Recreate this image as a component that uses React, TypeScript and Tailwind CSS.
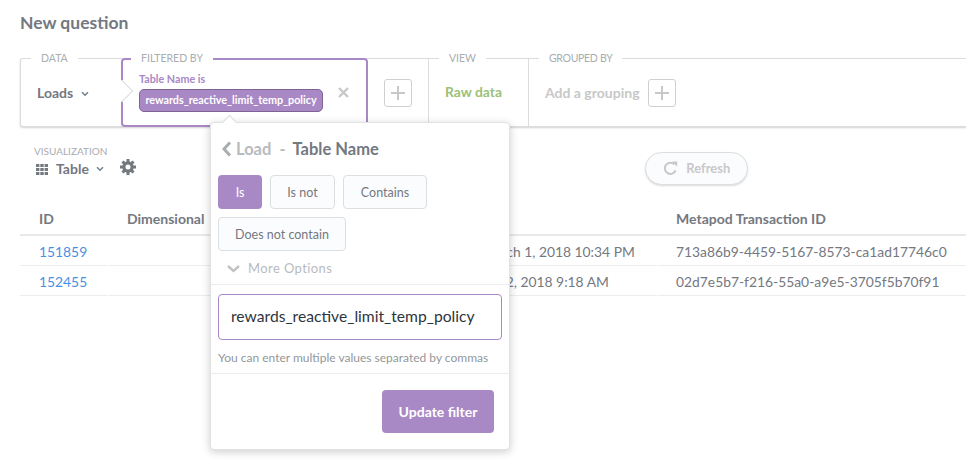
import * as React from 'react';

const Plus = () => (
  <div className="flex h-[28px] w-[28px] items-center justify-center rounded-[3px] border border-[#d0d0d0] bg-white">
    <svg width="14" height="14" viewBox="0 0 14 14">
      <path d="M7 0v14M0 7h14" stroke="#c8c8c8" strokeWidth="2" fill="none" />
    </svg>
  </div>
);

const Caret = ({ className }: { className?: string }) => (
  <svg className={className} width="8" height="6" viewBox="0 0 8 6">
    <path d="M1 1.2 4 4.2 7 1.2" stroke="#74838f" strokeWidth="1.6" fill="none" />
  </svg>
);

const Gear = () => (
  <svg width="16" height="16" viewBox="0 0 16 16">
    <g fill="#74787f">
      <path fillRule="evenodd" d="M8 2.2a5.8 5.8 0 1 0 0 11.6A5.8 5.8 0 0 0 8 2.2Zm0 3.3a2.5 2.5 0 1 1 0 5 2.5 2.5 0 0 1 0-5Z" />
      <rect x="6.5" y="0" width="3" height="3.4" />
      <rect x="6.5" y="12.6" width="3" height="3.4" />
      <rect x="0" y="6.5" width="3.4" height="3" />
      <rect x="12.6" y="6.5" width="3.4" height="3" />
      <rect x="6.5" y="0.2" width="3" height="3.4" transform="rotate(45 8 8)" />
      <rect x="6.5" y="12.4" width="3" height="3.4" transform="rotate(45 8 8)" />
      <rect x="0.2" y="6.5" width="3.4" height="3" transform="rotate(45 8 8)" />
      <rect x="12.4" y="6.5" width="3.4" height="3" transform="rotate(45 8 8)" />
    </g>
  </svg>
);

const Grid = () => (
  <svg width="12" height="11" viewBox="0 0 12 11" fill="#74787f">
    <rect x="0" y="0" width="3.4" height="3" />
    <rect x="4.3" y="0" width="3.4" height="3" />
    <rect x="8.6" y="0" width="3.4" height="3" />
    <rect x="0" y="4" width="3.4" height="3" />
    <rect x="4.3" y="4" width="3.4" height="3" />
    <rect x="8.6" y="4" width="3.4" height="3" />
    <rect x="0" y="8" width="3.4" height="3" />
    <rect x="4.3" y="8" width="3.4" height="3" />
    <rect x="8.6" y="8" width="3.4" height="3" />
  </svg>
);

const Label = ({ children, className }: { children: React.ReactNode; className: string }) => (
  <span className={`absolute top-[-7px] bg-white px-[10px] text-[10.5px] leading-[13px] text-[#a9adb0] uppercase ${className}`}>
    {children}
  </span>
);

const Option = ({ children, active, className }: { children: React.ReactNode; active?: boolean; className: string }) => (
  <div
    className={
      active
        ? `flex h-[34px] items-center justify-center rounded-[4px] bg-[#a989c5] pt-[2px] text-[12.5px] text-white ${className}`
        : `flex h-[34px] items-center justify-center rounded-[4px] border border-[#dcdfe2] bg-[#fbfcfe] pt-[2px] text-[12.5px] text-[#74787f] ${className}`
    }
  >
    {children}
  </div>
);

const rows = [
  ['151859', 'March 1, 2018 10:34 PM', '713a86b9-4459-5167-8573-ca1ad17746c0'],
  ['152455', 'Jan 2, 2018 9:18 AM', '02d7e5b7-f216-55a0-a9e5-3705f5b70f91'],
];

const App: React.FC = () => {
  return (
    <div className="relative h-[464px] w-[966px] overflow-hidden bg-white font-['Lato',sans-serif]">
      <h1 className="pt-[12px] pl-[20px] text-[17.5px] leading-[22px] font-bold text-[#74787f]">New question</h1>

      <div className="mt-[24px] ml-[20px] flex h-[69px] rounded-l-[3px] border-t border-b border-l border-[#dcdcdc] bg-white shadow-[0_1px_2px_rgba(0,0,0,0.18)]">
        <div className="relative flex w-[100px] items-center pl-[16px]">
          <Label className="left-[10px]">Data</Label>
          <span className="text-[14px] font-bold text-[#74787f]">Loads</span>
          <Caret className="mt-[2px] ml-[8px]" />
        </div>

        <div className="relative mt-[-1px] mb-[-1px] h-[69px] w-[247px] rounded-[4px] border-2 border-[#a989c5] pt-[12px] pl-[16px]">
          <Label className="!top-[-8px] left-[8px]">Filtered by</Label>
          <div className="absolute top-[23px] left-[-9px] h-[16px] w-[16px] rotate-45 border-t border-r border-[#dcdcdc] bg-white" />
          <div className="text-[10.75px] leading-[14px] font-bold text-[#a989c5]">Table Name is</div>
          <div className="mt-[3px] flex items-start">
            <div className="flex h-[23px] w-[184px] items-center justify-center rounded-[5px] border border-[#7f6394] bg-[#a989c5] text-[10.75px] font-bold text-white">
              rewards_reactive_limit_temp_policy
            </div>
            <svg className="mt-[-2px] ml-[15px]" width="11" height="11" viewBox="0 0 11 11">
              <path d="M1 1l9 9M10 1l-9 9" stroke="#c8c8c8" strokeWidth="2.4" fill="none" />
            </svg>
          </div>
        </div>

        <div className="flex w-[60px] items-center justify-center">
          <Plus />
        </div>

        <div className="relative flex w-[100px] items-center border-l border-[#dcdcdc] pl-[16px]">
          <Label className="left-[10px]">View</Label>
          <span className="text-[13.85px] font-bold text-[#9cc177]">Raw data</span>
        </div>

        <div className="relative flex flex-1 items-center border-l border-[#dcdcdc] pl-[16px]">
          <Label className="left-[10px] tracking-[-0.3px]">Grouped by</Label>
          <span className="text-[14px] font-bold text-[#c8c8c8]">Add a grouping</span>
          <div className="ml-[8px]">
            <Plus />
          </div>
        </div>
      </div>

      <div className="mt-[18px] flex h-[43px] items-start pl-[34px]">
        <div>
          <div className="text-[10px] leading-[13px] text-[#a9adb0] uppercase">Visualization</div>
          <div className="mt-[2px] ml-[2px] flex items-center">
            <Grid />
            <span className="ml-[8px] text-[14px] leading-[18px] font-bold text-[#74787f]">Table</span>
            <Caret className="ml-[7px]" />
          </div>
        </div>
        <div className="mt-[14px] ml-[13px]">
          <Gear />
        </div>
        <div className="mt-[7px] ml-[509px] flex h-[33px] w-[103px] items-center justify-center rounded-full border border-[#dcdfe2] bg-[#fbfcfe] text-[13px] font-bold text-[#c8c8c8] shadow-[0_1px_2px_rgba(0,0,0,0.15)]">
          <svg className="mr-[8px]" width="15" height="15" viewBox="0 0 15 15">
            <path d="M12.6 9.5A5.6 5.6 0 1 1 11.4 3.4" stroke="#c8c8c8" strokeWidth="2" fill="none" />
            <path d="M9 0.5h5.2v5.2z" fill="#c8c8c8" />
          </svg>
          Refresh
        </div>
      </div>

      <div className="mt-[15px] ml-[20px] text-[13.85px] text-[#74787f]">
        <div className="flex h-[33px] items-center border-b-2 border-[#e8e8e8] text-[14px] font-bold">
          <div className="w-[107px] pl-[19px]">ID</div>
          <div className="w-[549px]">Dimensional</div>
          <div>Metapod Transaction ID</div>
        </div>
        {rows.map(([id, date, txn]) => (
          <div key={id} className="flex h-[30px]">
            <div className="mr-px flex w-[87px] items-center border-b border-[#ececec] pt-[3px] pl-[19px] text-[#4a90e2]">{id}</div>
            <div className="w-[373px] border-b border-[#ececec]" />
            <div className="mr-px flex w-[176px] items-center border-b border-[#ececec] pt-[3px] pl-px">{date}</div>
            <div className="flex flex-1 items-center border-b border-[#ececec] pt-[3px] pl-[18px]">{txn}</div>
          </div>
        ))}
      </div>

      <div className="absolute top-[122px] left-[210px] h-[328px] w-[300px] rounded-[4px] border border-[#e2e2e2] bg-white shadow-[0_2px_8px_rgba(0,0,0,0.2)]">
        <div className="absolute top-[-6px] left-[13px] h-[11px] w-[11px] rotate-45 border-t border-l border-[#dcdcdc] bg-white" />
        <div className="flex items-center pt-[16px] pl-[11px] text-[16.5px] leading-[20px] font-bold">
          <svg width="10" height="16" viewBox="0 0 10 16">
            <path d="M8 1.5 2 8l6 6.5" stroke="#a9adb0" strokeWidth="3" fill="none" />
          </svg>
          <span className="ml-[4px] text-[#b8bbbe]">Load</span>
          <span className="ml-[8px] text-[#b8bbbe]">-</span>
          <span className="ml-[7px] text-[#74787f]">Table Name</span>
        </div>
        <div className="mt-[16px] flex w-[260px] flex-wrap gap-[8px] pl-[7px]">
          <Option active className="w-[44px]">Is</Option>
          <Option className="w-[65px]">Is not</Option>
          <Option className="w-[84px]">Contains</Option>
          <Option className="w-[128px]">Does not contain</Option>
        </div>
        <div className="flex h-[34px] items-center border-b border-[#ececec] pt-[2px] pl-[16px] text-[13px] text-[#b8bbbe]">
          <svg width="13" height="8" viewBox="0 0 13 8">
            <path d="M1 1l5.5 5L12 1" stroke="#c0c2c4" strokeWidth="2.4" fill="none" />
          </svg>
          <span className="ml-[8px] tracking-[0.4px]">More Options</span>
        </div>
        <div className="mt-[9px] mr-[7px] ml-[7px] flex h-[46px] items-center rounded-[4px] border border-[#a989c5] pl-[12px] text-[15.65px] text-[#2e353b]">
          rewards_reactive_limit_temp_policy
        </div>
        <div className="mt-[11px] ml-[7px] text-[12px] leading-[14px] text-[#93979b]">
          You can enter multiple values separated by commas
        </div>
        <div className="mt-[8px] flex justify-end border-t border-[#ececec] pt-[16px] pr-[15px]">
          <div className="flex h-[43px] w-[112px] items-center justify-center rounded-[4px] bg-[#a989c5] text-[14px] font-bold text-white">
            Update filter
          </div>
        </div>
      </div>
    </div>
  );
};

export default App;
